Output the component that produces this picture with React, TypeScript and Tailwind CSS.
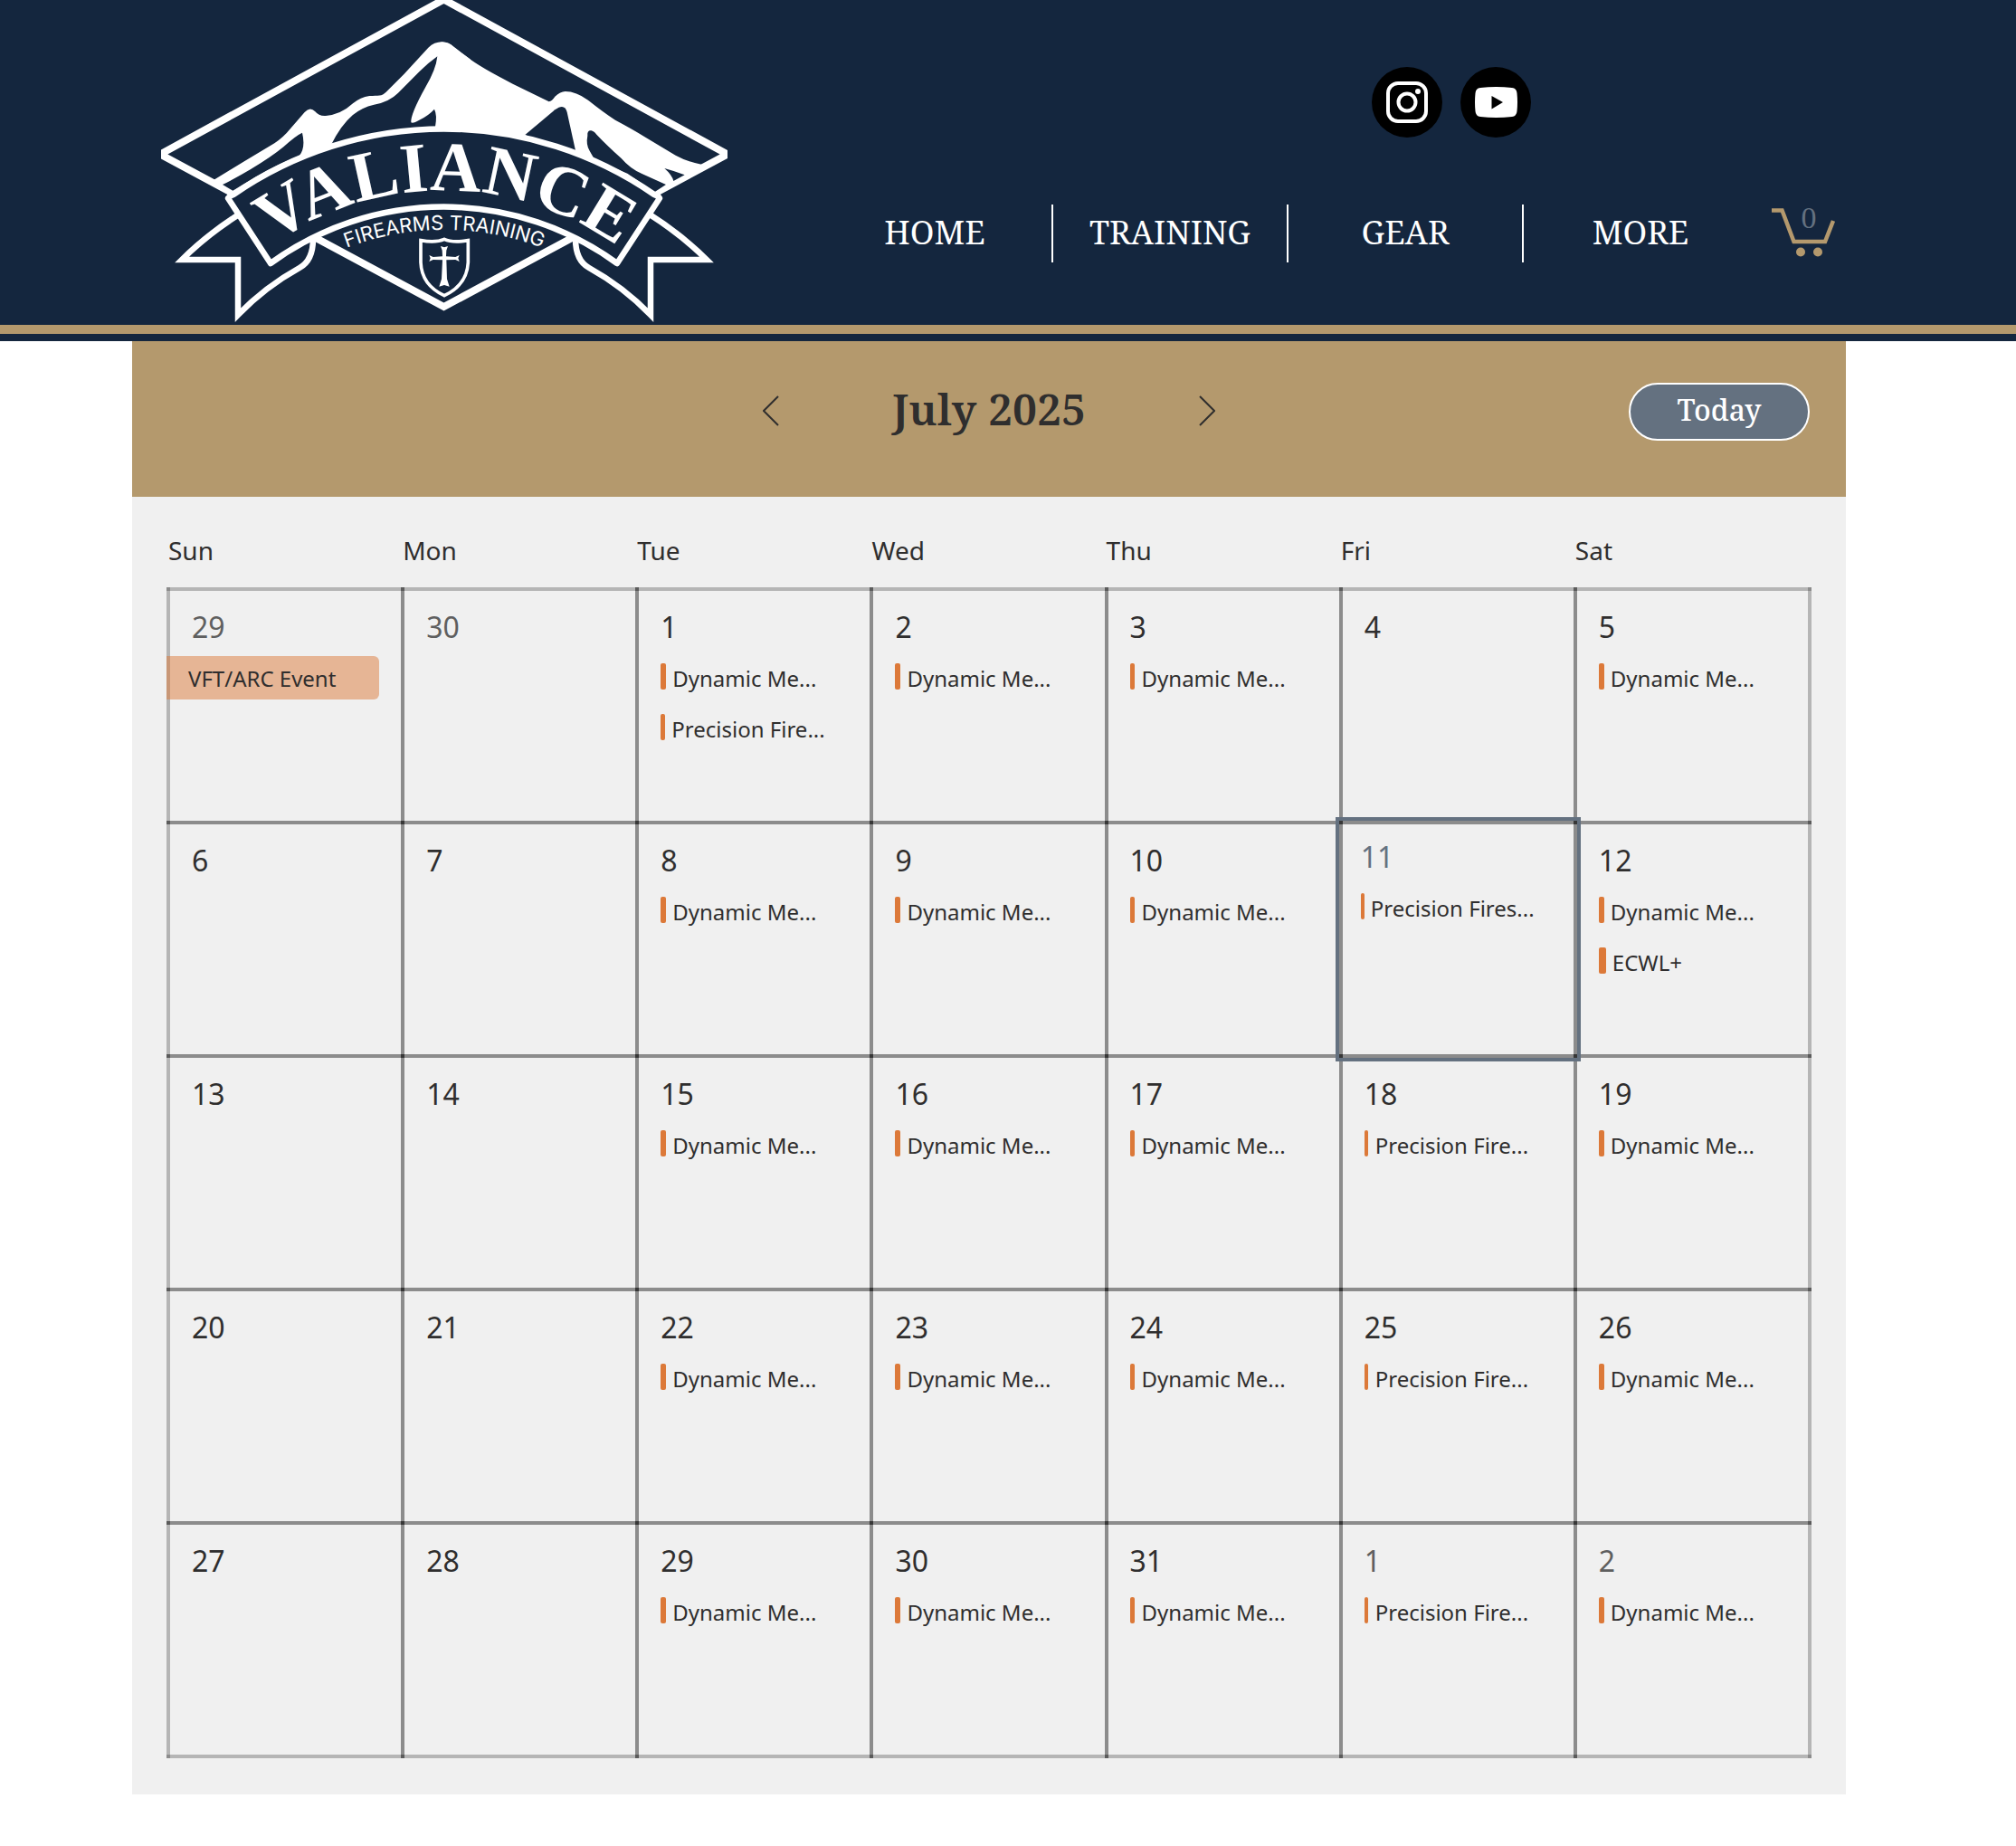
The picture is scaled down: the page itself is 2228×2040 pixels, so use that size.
type CalendarEvent = { title: string; bar?: string; span?: boolean };
type Day = { n: number; muted?: boolean; today?: boolean; events?: CalendarEvent[] };

const DYN: CalendarEvent = { title: "Dynamic Me...", bar: "w-1.5" };
const DYN_THU: CalendarEvent = { title: "Dynamic Me...", bar: "w-[5px] mr-px" };
const PREC_TUE: CalendarEvent = { title: "Precision Fire...", bar: "w-[5px]" };
const PREC: CalendarEvent = { title: "Precision Fire...", bar: "w-1 mr-px" };

const WEEKDAYS = ["Sun", "Mon", "Tue", "Wed", "Thu", "Fri", "Sat"];

const WEEKS: Day[][] = [
  [
    { n: 29, muted: true, events: [{ title: "VFT/ARC Event", span: true }] },
    { n: 30, muted: true },
    { n: 1, events: [DYN, PREC_TUE] },
    { n: 2, events: [DYN] },
    { n: 3, events: [DYN_THU] },
    { n: 4 },
    { n: 5, events: [DYN] },
  ],
  [
    { n: 6 },
    { n: 7 },
    { n: 8, events: [DYN] },
    { n: 9, events: [DYN] },
    { n: 10, events: [DYN_THU] },
    { n: 11, today: true, events: [{ title: "Precision Fires...", bar: "w-1" }] },
    { n: 12, events: [DYN, { title: "ECWL+", bar: "w-2" }] },
  ],
  [
    { n: 13 },
    { n: 14 },
    { n: 15, events: [DYN] },
    { n: 16, events: [DYN] },
    { n: 17, events: [DYN_THU] },
    { n: 18, events: [PREC] },
    { n: 19, events: [DYN] },
  ],
  [
    { n: 20 },
    { n: 21 },
    { n: 22, events: [DYN] },
    { n: 23, events: [DYN] },
    { n: 24, events: [DYN_THU] },
    { n: 25, events: [PREC] },
    { n: 26, events: [DYN] },
  ],
  [
    { n: 27 },
    { n: 28 },
    { n: 29, events: [DYN] },
    { n: 30, events: [DYN] },
    { n: 31, events: [DYN_THU] },
    { n: 1, muted: true, events: [PREC] },
    { n: 2, muted: true, events: [DYN] },
  ],
];

const TAIL =
  "M264 237 Q228 260 201 287 H263 V348 Q293 317 331 296 C342 290 346 279 346 264";

function Logo() {
  return (
    <svg
      viewBox="178 0 626 358"
      className="block h-[358px] w-[626px] shrink-0"
      role="img"
      aria-label="Valiance Firearms Training"
    >
      <defs>
        <path id="name-arc" d="M250 314 A330 330 0 0 1 730 314" />
        <path id="tag-arc" d="M340 294 A305 305 0 0 1 642 294" />
      </defs>
      <path d="M177 170.500 L490.500 -0.500 L804 170.500 L490.500 339 Z" fill="none" stroke="#fff" strokeWidth="8" />
      <g transform="translate(160 0) scale(.33333)">
        <path
          fill="#fff"
          d="M228 597 L330 535 L430 475 Q460 455 480 430 L530 372 Q548 352 565 370 Q578 386 600 384 Q650 380 690 343 Q715 322 745 318 C775 316 785 320 800 305 L860 245 L940 158 Q960 139 985 139 Q1010 139 1025 157 L1015 150 Q1000 139 1015 150 Q1050 175 1070 190 Q1110 222 1220 278 L1340 337 Q1350 335 1360 320 Q1378 304 1394 303 Q1430 303 1470 332 Q1520 372 1560 398 Q1620 430 1660 455 L1760 515 Q1800 537 1852 547 L1760 600 L1690 640 L980 500 L290 640 Z"
        />
        <path fill="#fff" d="M960 150 Q985 130 1015 148 Q1060 182 1080 197 L1000 240 Z" />
        <g fill="#14263e">
          <path d="M258 612 Q310 586 350 562 Q420 520 460 487 Q500 450 522 440 Q534 490 512 517 Q440 545 370 585 L292 632 Z" />
          <path d="M618 480 Q650 415 690 381 Q720 356 760 347 Q810 338 840 308 L910 238 Q940 208 970 187 Q966 230 930 290 Q880 380 883 406 Q890 410 910 398 Q940 384 960 362 Q970 380 963 420 L940 440 L700 470 Z" />
          <path d="M1261 447 L1360 364 Q1392 340 1400 372 L1428 499 L1340 480 Z" />
          <path d="M1480 433 Q1466 432 1468 450 Q1462 480 1475 500 L1492 530 L1600 575 L1690 637 L1728 612 L1650 577 Q1610 560 1580 525 Q1530 480 1498 446 Q1488 434 1480 433 Z" />
          <path d="M1723 558 Q1760 568 1790 580 L1753 600 Q1748 580 1723 558 Z" />
        </g>
      </g>
      <g fill="#14263e" stroke="#fff" strokeWidth="6.500">
        <path d={TAIL} strokeMiterlimit="8" />
        <path d={TAIL} strokeMiterlimit="8" transform="translate(982 0) scale(-1 1)" />
        <path
          d="M252 219 Q254 216 258 215 A409 409 0 0 1 723 215 Q727 216 729 219 L682 291 A325 325 0 0 0 299 291 Z"
          strokeLinejoin="round"
        />
      </g>
      <text
        fill="#fff"
        fontSize="78"
        fontWeight="700"
        textAnchor="middle"
        className="font-['Liberation_Serif',serif]"
      >
        <textPath href="#name-arc" startOffset="50.5%">VALIANCE</textPath>
      </text>
      <text
        fill="#fff"
        fontSize="22"
        fontWeight="400"
        textAnchor="middle"
        className="font-['Inter',sans-serif]"
      >
        <textPath href="#tag-arc" startOffset="50%">FIREARMS TRAINING</textPath>
      </text>
      <g transform="translate(340 130) scale(.33333)">
        <path
          d="M375 407 Q425 416 453 403 Q481 416 532 407 V480 Q528 555 453 590 Q378 555 375 480 Z"
          fill="none"
          stroke="#fff"
          strokeWidth="11"
        />
        <path
          fill="#fff"
          d="M441 426 L453 430 L465 426 L460 440 L459 460 L490 462 L503 456 L499 466 L503 477 L490 471 L460 472 L462 535 L470 560 L453 555 L436 560 L444 535 L447 472 L416 471 L403 477 L407 466 L403 456 L416 462 L447 460 L446 440Z"
        />
      </g>
    </svg>
  );
}

function SocialLinks() {
  return (
    <div className="flex justify-end gap-5 pr-[336px]">
      <a href="#instagram" aria-label="Instagram" className="flex size-[78px] items-center justify-center rounded-full bg-black">
        <svg viewBox="0 0 46 46" className="size-[46px]" fill="none" stroke="#fff">
          <rect x="2" y="2" width="42" height="42" rx="11" strokeWidth="4" />
          <circle cx="23" cy="23" r="9.500" strokeWidth="4" />
          <circle cx="35" cy="11" r="3" fill="#fff" stroke="none" />
        </svg>
      </a>
      <a href="#youtube" aria-label="YouTube" className="flex size-[78px] items-center justify-center rounded-full bg-black">
        <svg viewBox="0 0 47 34" className="h-[34px] w-[47px]">
          <path
            fill="#fff"
            d="M6 1 Q23.500 -1 41 1 Q46 1.500 46.500 7 Q47.500 17 46.500 27 Q46 32.500 41 33 Q23.500 35 6 33 Q1 32.500 .5 27 Q-.5 17 .5 7 Q1 1.500 6 1 Z"
          />
          <path fill="#000" d="M18.500 10 L31 17 L18.500 24.500 Z" />
        </svg>
      </a>
    </div>
  );
}

function Header() {
  return (
    <header className="bg-[#14263e] pb-2 font-['Noto_Serif','Droid_Serif','DejaVu_Serif_Condensed',serif]">
      <div className="flex justify-between pr-[200px] pl-[178px]">
        <Logo />
        <div className="flex flex-col pt-[74px]">
          <SocialLinks />
          <div className="mt-[74px] flex gap-3.5">
            <nav className="flex text-4xl text-white">
              {["HOME", "TRAINING", "GEAR", "MORE"].map((item) => (
                <a
                  key={item}
                  href={"#" + item.toLowerCase()}
                  className="flex h-16 w-[260px] items-center justify-center border-r-2 border-white pb-0.5 last:border-transparent"
                >
                  {item}
                </a>
              ))}
            </nav>
            <a href="#cart" aria-label="Cart with 0 items" className="-mt-2">
              <svg viewBox="0 -12 70 66" className="h-[66px] w-[70px]">
                <path d="M0 2.500 H11.500 L24.500 37 H59 L68 14" fill="none" stroke="#b4996d" strokeWidth="4.500" />
                <circle cx="32" cy="48.500" r="5" fill="#b4996d" />
                <circle cx="51" cy="48.500" r="5" fill="#b4996d" />
                <text x="41" y="22" textAnchor="middle" fontSize="34" fill="#647180" className="font-['Liberation_Serif',serif]">
                  0
                </text>
              </svg>
            </a>
          </div>
        </div>
      </div>
      <div className="mt-px h-2.5 bg-[#b4996d]" />
    </header>
  );
}

function Chevron({ d }: { d: string }) {
  return (
    <svg viewBox="0 0 18 34" className="h-[34px] w-[18px]" fill="none" stroke="#2f2e2e" strokeWidth="2">
      <path d={d} />
    </svg>
  );
}

function DayCell({ day }: { day: Day }) {
  return (
    <td className="p-0">
      <div
        className={
          "relative -mr-1 -mb-1 h-[262px] border-x-4 border-[#2f2e2e]/30 pr-6 before:pointer-events-none before:absolute before:-inset-x-1 before:inset-y-0 before:border-y-4 before:border-[#2f2e2e]/30 " +
          (day.today ? "z-10 pt-5 pl-5 outline-4 outline-[#647180]" : "pt-6 pl-6")
        }
      >
        <div
          className={
            "text-[32px] leading-10 " +
            (day.today ? "text-[#647180]" : day.muted ? "text-[#5f5f5f]" : "text-[#2f2e2e]")
          }
        >
          {day.n}
        </div>
        <div className="mt-3 flex flex-col gap-2">
          {day.events?.map((e) =>
            e.span ? (
              <button key={e.title} className="-ml-7 flex h-12 items-center rounded-r-md bg-[#dc7939]/50 pt-0.5 pl-6 text-2xl">
                {e.title}
              </button>
            ) : (
              <button key={e.title} className="flex h-12 items-center gap-[7px] pt-0.5 text-2xl whitespace-nowrap">
                <span className={"mt-1.5 h-[29px] self-start rounded-xs bg-[#dc7939] " + e.bar} />
                {e.title}
              </button>
            )
          )}
        </div>
      </div>
    </td>
  );
}

export default function App() {
  return (
    <div className="min-h-screen bg-white font-['Noto_Sans',sans-serif] text-[#2f2e2e]">
      <Header />
      <main className="mr-[188px] ml-[146px]">
        <div className="grid grid-cols-[1fr_auto_1fr] items-center bg-[#b4996d] px-10 pt-[46px] pb-[62px] font-['Noto_Serif','Droid_Serif','DejaVu_Serif_Condensed',serif]">
          <div />
          <div className="flex w-[500px] items-center justify-between">
            <button aria-label="Previous month" className="pb-0.5">
              <Chevron d="M17 1 L1 17 L17 33" />
            </button>
            <h1 className="pb-1.5 text-5xl font-semibold">July 2025</h1>
            <button aria-label="Next month" className="pb-0.5">
              <Chevron d="M1 1 L17 17 L1 33" />
            </button>
          </div>
          <button className="h-16 w-[200px] justify-self-end rounded-full border-2 border-white bg-[#647180] pb-1 text-[32px] font-medium text-white">
            Today
          </button>
        </div>
        <div className="bg-[#f0f0f0] pr-[42px] pb-11 pl-[38px]">
          <table className="w-full table-fixed">
            <thead>
              <tr>
                {WEEKDAYS.map((d) => (
                  <th key={d} className="h-[100px] p-0 pt-[18px] pl-0.5 text-left text-[28px] font-normal">
                    {d}
                  </th>
                ))}
              </tr>
            </thead>
            <tbody>
              {WEEKS.map((week, i) => (
                <tr key={i}>
                  {week.map((day, j) => (
                    <DayCell key={j} day={day} />
                  ))}
                </tr>
              ))}
            </tbody>
          </table>
        </div>
      </main>
    </div>
  );
}
